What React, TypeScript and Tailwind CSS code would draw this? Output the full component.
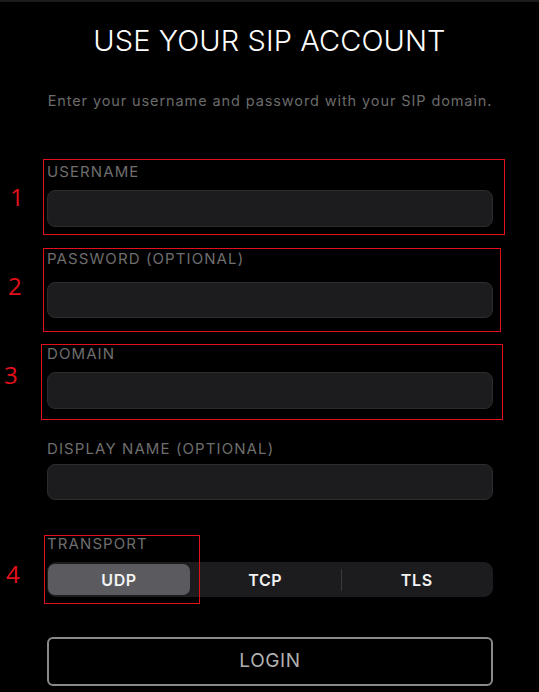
import React from "react";

const font = { fontFamily: "Inter, 'Noto Sans', sans-serif" };

type FieldProps = { label: string; labelMt: string; inputMt: string; inputH: string };

function Field({ label, labelMt, inputMt, inputH }: FieldProps) {
  return (
    <div className="flex flex-col">
      <div className={`${labelMt} h-[16px] text-[15px] leading-[16px] tracking-[1.1px] text-[#6e6e6e]`}>{label}</div>
      <div className={`${inputMt} ${inputH} rounded-[8px] border border-[#2c2c2e] bg-[#1c1c1e]`} />
    </div>
  );
}

const marks = [
  { n: "1", box: "left-[43px] top-[159px] w-[462px] h-[76px]", num: "left-[10px] top-[181px]" },
  { n: "2", box: "left-[43px] top-[248px] w-[458px] h-[84px]", num: "left-[8px] top-[270px]" },
  { n: "3", box: "left-[41px] top-[344px] w-[462px] h-[76px]", num: "left-[4px] top-[359px]" },
  { n: "4", box: "left-[44px] top-[535px] w-[156px] h-[69px]", num: "left-[6px] top-[558px]" },
];

export default function App() {
  return (
    <div className="relative h-[692px] w-[539px] overflow-hidden bg-black" style={font}>
      <div className="h-[2px] bg-[#1c1c1c]" />
      <div className="flex flex-col pl-[47px] pr-[46px]">
        <h1 className="mt-[23px] h-[32px] -ml-[1px] text-center text-[29px] font-light leading-[32px] tracking-[0.1px] text-white">
          USE YOUR SIP ACCOUNT
        </h1>
        <p className="mt-[34px] -mx-[4px] h-[20px] text-center text-[14.5px] leading-[20px] tracking-[0.9px] text-[#6b6b6b]">
          Enter your username and password with your SIP domain.
        </p>

        <Field label="USERNAME" labelMt="mt-[53px]" inputMt="mt-[10px]" inputH="h-[37px]" />
        <Field label="PASSWORD (OPTIONAL)" labelMt="mt-[24px]" inputMt="mt-[15px]" inputH="h-[36px]" />
        <Field label="DOMAIN" labelMt="mt-[28px]" inputMt="mt-[10px]" inputH="h-[37px]" />
        <Field label="DISPLAY NAME (OPTIONAL)" labelMt="mt-[32px]" inputMt="mt-[7px]" inputH="h-[36px]" />

        <div className="mt-[36px] h-[16px] text-[15px] leading-[16px] tracking-[1.1px] text-[#6e6e6e]">TRANSPORT</div>
        <div className="mt-[10px] flex h-[35px] items-center rounded-[9px] bg-[#1c1c1e] px-[1px] py-[2px]">
          <div className="flex h-full w-[142px] items-center justify-center rounded-[7px] bg-[#5b5b5f] text-[16px] font-semibold tracking-[0.6px] text-[#f2f2f2]">
            UDP
          </div>
          <div className="flex h-full flex-1 items-center justify-center text-[16px] font-semibold tracking-[0.6px] text-[#f2f2f2]">
            TCP
          </div>
          <div className="h-[22px] w-px bg-[#3a3a3c]" />
          <div className="flex h-full flex-1 items-center justify-center text-[16px] font-semibold tracking-[0.6px] text-[#f2f2f2]">
            TLS
          </div>
        </div>

        <button className="mt-[40px] flex h-[49px] items-center justify-center rounded-[6px] border-2 border-[#8a8a8a] text-[19px] tracking-[0.6px] text-[#b0b0b0]">
          LOGIN
        </button>
      </div>

      {marks.map((m) => (
        <React.Fragment key={m.n}>
          <div className={`absolute border border-[#e3101b] ${m.box}`} />
          <div
            className={`absolute text-[24px] leading-[32px] text-[#e3101b] ${m.num}`}
            style={{ fontFamily: "'Open Sans', sans-serif" }}
          >
            {m.n}
          </div>
        </React.Fragment>
      ))}
    </div>
  );
}
